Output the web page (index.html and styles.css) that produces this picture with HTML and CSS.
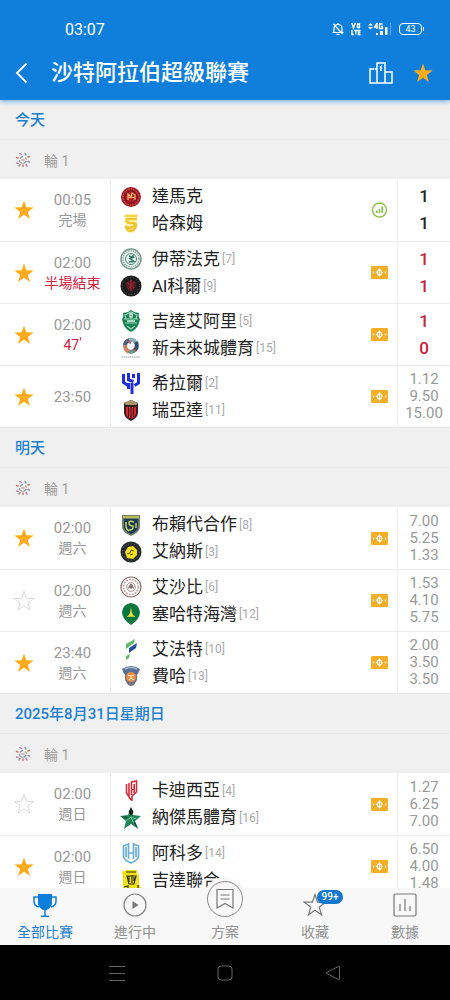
FILE: index.html
```html
<!DOCTYPE html>
<html lang="zh-Hant">
<head>
    <meta charset="UTF-8">
    <meta name="viewport" content="width=device-width, initial-scale=1.0">
    <title>沙特阿拉伯超級聯賽</title>
    <link rel="stylesheet" href="styles.css">
</head>
<body>
    <!-- Shared icons -->
    <svg class="sprite" aria-hidden="true">
        <symbol id="star" viewBox="0 0 24 24">
            <path d="M12 1.5l2.6 7.6 8 .1-6.4 4.9 2.3 7.7L12 17.2l-6.5 4.6 2.3-7.7-6.4-4.9 8-.1z"/>
        </symbol>
        <symbol id="odds" viewBox="0 0 17 13">
            <rect width="17" height="13" rx="1" fill="#f5ae25"/>
            <path d="M8.500 2l3.200 4.500-3.200 4.500-3.200-4.500z" fill="#fff"/>
            <circle cx="8.500" cy="6.500" r="2.800" fill="#fff"/>
            <path d="M7.500 5v3M9.500 5v3" stroke="#f5ae25" stroke-width=".9"/>
            <path d="M2.500 5.500v2M14.500 5.500v2" stroke="#fff" stroke-width="1.100"/>
        </symbol>
        <symbol id="league" viewBox="0 0 16 16">
            <g fill="none" stroke-width="1.500" stroke-linecap="round">
                <path d="M5 1.500l1.500 1M1.500 11l1.500.5M12 14l-1-1.500" stroke="#b08aab"/>
                <path d="M10 1.500l1 1.500M4 14l1-1.500M14.500 10l-1.500-.5" stroke="#8d9a94"/>
                <path d="M1.500 5.500l1.500.5M13 5l1.500-.5M8 14.500V13" stroke="#d2776c"/>
                <path d="M5.500 6l2-1.500M11 9.500l-2 1.500M4.500 8.500v1" stroke="#8b91a8"/>
                <path d="M10.500 6l1 1M5.500 10.500l1.500 1M7 8h2" stroke="#b9a79a"/>
            </g>
        </symbol>
    </svg>

    <header class="header">
        <div class="status-bar">
            <span class="clock">03:07</span>
            <div class="status-icons">
                <svg width="12" height="14" viewBox="0 0 12 14" fill="none" stroke="#fff" stroke-width="1.200">
                    <path d="M2 10V6.500C2 4 4 2.500 6 2.500S10 4 10 6.500V10M.5 10.500h11M4.500 12.500h3M6 1v1.500M1.500 2l9 10"/>
                </svg>
                <svg width="10" height="14" viewBox="0 0 10 14" fill="none" stroke="#fff" stroke-width="1.400">
                    <path d="M.8 1l1.700 5L4.300 1M6.500 2h2v3.500h-2zM1 8v4.500h2M3 8.500h3.500M4.800 8.500v4M9.500 8.500h-2v4h2M7.500 10.500h2"/>
                </svg>
                <svg width="24" height="14" viewBox="0 0 24 14" fill="#fff">
                    <path d="M0 3.500L2.500 1 5 3.500zM0 5l2.500 2.500L5 5z"/>
                    <path d="M9 1L6.500 5H10M9 1v6M14.500 2h-3v4.500h3v-2h-1.500" fill="none" stroke="#fff" stroke-width="1.300"/>
                    <path d="M8 11h2v2H8zM12 9h3v4h-3zM17 5h2.500v8H17z"/>
                    <path d="M22 1h1v12h-1z" opacity=".35"/>
                </svg>
                <span class="battery">43</span>
            </div>
        </div>
        <div class="title-bar">
            <button class="icon-btn back" aria-label="返回">
                <svg width="14" height="22" viewBox="0 0 14 22" fill="none" stroke="#fff" stroke-width="1.800"><path d="M11.500 1.500L2 11l9.500 9.500"/></svg>
            </button>
            <h1>沙特阿拉伯超級聯賽</h1>
            <div class="actions">
                <button class="icon-btn" aria-label="積分榜">
                    <svg width="24" height="22" viewBox="0 0 24 22" fill="none" stroke="#fff" stroke-width="1.500">
                        <path d="M8 21V1h8v20M8 7H5.500M5 7H1v14h22V10h-4M16 10h3M11 5.500l1-1V9"/>
                    </svg>
                </button>
                <button class="icon-btn fav on" aria-label="收藏">
                    <svg width="22" height="22"><use href="#star"/></svg>
                </button>
            </div>
        </div>
    </header>

    <main class="fixtures">
        <section>
            <h2 class="date">今天</h2>
            <div class="round"><svg width="16" height="16"><use href="#league"/></svg>輪 1</div>
            <div class="matches">
                <div class="match">
                    <button class="fav on" aria-label="收藏"><svg width="22" height="22"><use href="#star"/></svg></button>
                    <div class="time">00:05<span>完場</span></div>
                    <div class="teams">
                        <div class="team">
                            <svg class="crest" viewBox="0 0 22 22"><circle cx="11" cy="11" r="10" fill="#a51e28"/><circle cx="11" cy="11" r="8" fill="none" stroke="#d9765f" stroke-dasharray="1 1.500"/><circle cx="11" cy="11" r="6" fill="#b3202c" stroke="#701520"/><path d="M8 14V8l3 3 1-4 3 2v5M7.500 11.500H15" fill="none" stroke="#f0b96a" stroke-width="1.200"/></svg>
                            達馬克
                        </div>
                        <div class="team">
                            <svg class="crest" viewBox="0 0 22 22"><path d="M4.500 1.500h13v3h-13z" fill="#f7d54a"/><path d="M5 4h12v10a6 6 0 0 1-12 0z" fill="#fff3b5"/><path d="M17 6H8q-3 1-1 3 2 1.500 7 1 3 .5 2 3-1 4-5 5-4 0-5-4l5 1 4-3" fill="none" stroke="#eec52e" stroke-width="2.300"/></svg>
                            哈森姆
                        </div>
                    </div>
                    <svg class="tag" width="17" height="16" viewBox="0 0 17 16" fill="none" stroke="#8bc34a"><circle cx="8.500" cy="8" r="7" stroke-width="1.400"/><path d="M5.800 8.500V11M8.500 7v4M11.200 4.500V11" stroke-width="1.700"/></svg>
                    <div class="score"><span>1</span><span>1</span></div>
                </div>
                <div class="match">
                    <button class="fav on" aria-label="收藏"><svg width="22" height="22"><use href="#star"/></svg></button>
                    <div class="time">02:00<span class="live">半場結束</span></div>
                    <div class="teams">
                        <div class="team">
                            <svg class="crest" viewBox="0 0 22 22"><circle cx="11" cy="11" r="10" fill="#fff" stroke="#73988c" stroke-width="1.500"/><circle cx="11" cy="11" r="8" fill="none" stroke="#84a89c" stroke-width="1.600" stroke-dasharray="1.500 .8"/><circle cx="11" cy="11" r="5.500" fill="#e9f5f0" stroke="#438371"/><path d="M9 8l4 1.500-3 1 4 3-5 .5M13 7v2" fill="none" stroke="#287661" stroke-width="1.500"/></svg>
                            伊蒂法克<span class="rank">[7]</span>
                        </div>
                        <div class="team">
                            <svg class="crest" viewBox="0 0 22 22"><circle cx="11" cy="11" r="10.500" fill="#1c1b1c"/><circle cx="11" cy="11" r="8.500" fill="none" stroke="#59634e" stroke-dasharray="1 2"/><path d="M6 7l3-1 2-2 2 2 3 1v5l-5 5-5-5z" fill="#571d25"/><path d="M8 8l6 5M14 7l-6 7M11 5v11" stroke="#a12a37"/></svg>
                            Al科爾<span class="rank">[9]</span>
                        </div>
                    </div>
                    <svg class="tag" width="17" height="13"><use href="#odds"/></svg>
                    <div class="score live"><span>1</span><span>1</span></div>
                </div>
                <div class="match">
                    <button class="fav on" aria-label="收藏"><svg width="22" height="22"><use href="#star"/></svg></button>
                    <div class="time">02:00<span class="live">47<sup>'</sup></span></div>
                    <div class="teams">
                        <div class="team">
                            <svg class="crest" viewBox="0 0 22 22"><path d="M3 3l5-1 3-2 3 2 5 1q-1 4 1 6-1 9-9 13Q3 18 2 9q2-2 1-6z" fill="#168451"/><path d="M5 5l6-3 6 3-1 4H6zM4 9h14M5 13h12M7 16l4 3 4-3" fill="none" stroke="#a1d5ba" stroke-width="1.200"/><path d="M7 11h8M10 4h2v3h-2z" stroke="#e3f4e9" stroke-width="1.300"/></svg>
                            吉達艾阿里<span class="rank">[5]</span>
                        </div>
                        <div class="team">
                            <svg class="crest" viewBox="0 0 22 22" fill="none" stroke-width="4"><path d="M5 9q0-5 5-6" stroke="#44617b"/><path d="M9 3q5-1 7 3" stroke="#8db0b5"/><path d="M16 5q2 5-1 8" stroke="#354b68"/><path d="M15 13q-3 3-7 1" stroke="#5d9b92"/><path d="M9 15q-4-2-4-7" stroke="#cf8260"/><path d="M7 4l4 2M13 12l3 2" stroke="#a85860" stroke-width="2"/><path d="M1.500 20h19" stroke="#bbb" stroke-width="1.500" stroke-dasharray="1.500 .6"/></svg>
                            新未來城體育<span class="rank">[15]</span>
                        </div>
                    </div>
                    <svg class="tag" width="17" height="13"><use href="#odds"/></svg>
                    <div class="score live"><span>1</span><span>0</span></div>
                </div>
                <div class="match">
                    <button class="fav on" aria-label="收藏"><svg width="22" height="22"><use href="#star"/></svg></button>
                    <div class="time">23:50</div>
                    <div class="teams">
                        <div class="team">
                            <svg class="crest" viewBox="0 0 22 22" fill="none" stroke="#1e2ed8" stroke-width="3"><path d="M3.500 2v8.500l4.500 3M8.500 1v7l5 1.500M13.500 2v4M18.500 1v10l-4 2.500M12 11v11M8.500 11v6"/></svg>
                            希拉爾<span class="rank">[2]</span>
                        </div>
                        <div class="team">
                            <svg class="crest" viewBox="0 0 22 22"><path d="M4 4l7-3 7 3v9q0 6-7 9-7-3-7-9z" fill="#2d2021"/><path d="M4 4l7-3 7 3-2 2H6z" fill="#a6956a"/><path d="M6 8h10v6q0 4-5 6-5-2-5-6z" fill="#dc2631"/><path d="M8.500 8v10M11 8v12M13.500 8v10" stroke="#331b1d" stroke-width="1"/></svg>
                            瑞亞達<span class="rank">[11]</span>
                        </div>
                    </div>
                    <svg class="tag" width="17" height="13"><use href="#odds"/></svg>
                    <div class="prices"><span>1.12</span><span>9.50</span><span>15.00</span></div>
                </div>
            </div>
        </section>

        <section>
            <h2 class="date">明天</h2>
            <div class="round"><svg width="16" height="16"><use href="#league"/></svg>輪 1</div>
            <div class="matches">
                <div class="match">
                    <button class="fav on" aria-label="收藏"><svg width="22" height="22"><use href="#star"/></svg></button>
                    <div class="time">02:00<span>週六</span></div>
                    <div class="teams">
                        <div class="team">
                            <svg class="crest" viewBox="0 0 22 22"><path d="M2 1h18v12q0 5-9 9-9-4-9-9z" fill="#718066"/><path d="M4 5h14v8q0 4-7 7-7-3-7-7z" fill="#193958"/><path d="M3 3h16" stroke="#d5cb55" stroke-width="1.500"/><path d="M14 8q-5-2-5 1t4 3q1 4-4 4M6 8v5q1 3 3 4M16 9v5" fill="none" stroke="#c9d15f" stroke-width="1.500"/></svg>
                            布賴代合作<span class="rank">[8]</span>
                        </div>
                        <div class="team">
                            <svg class="crest" viewBox="0 0 22 22"><circle cx="11" cy="11" r="10.500" fill="#272a2c"/><circle cx="11" cy="11" r="8.300" fill="none" stroke="#65706b" stroke-dasharray="1 2"/><path d="M5 11l3-5 5-1 4 4v5l-4 4-6-1z" fill="#f4df20"/><path d="M7 13l3-1 1-3 3 1M10 14l3-1" fill="none" stroke="#5c5919" stroke-width="1"/></svg>
                            艾納斯<span class="rank">[3]</span>
                        </div>
                    </div>
                    <svg class="tag" width="17" height="13"><use href="#odds"/></svg>
                    <div class="prices"><span>7.00</span><span>5.25</span><span>1.33</span></div>
                </div>
                <div class="match">
                    <button class="fav" aria-label="收藏"><svg width="22" height="22"><use href="#star"/></svg></button>
                    <div class="time">02:00<span>週六</span></div>
                    <div class="teams">
                        <div class="team">
                            <svg class="crest" viewBox="0 0 22 22" fill="none"><circle cx="11" cy="11" r="10" fill="#fff" stroke="#8d6d6d" stroke-width="1.200"/><circle cx="11" cy="11" r="7.500" stroke="#c8aaaa" stroke-width="1.600" stroke-dasharray="2 1"/><circle cx="11" cy="11" r="4.300" stroke="#aa8888"/><path d="M8.500 12.500q1-4 2.500-4t2.500 4M9 11h4M11 8v5" stroke="#684c50"/></svg>
                            艾沙比<span class="rank">[6]</span>
                        </div>
                        <div class="team">
                            <svg class="crest" viewBox="0 0 22 22"><path d="M11 0q8 1 9 9 0 7-9 13Q2 16 2 9q1-8 9-9z" fill="#08763e"/><path d="M11 4l1 6 2 3H8l2-3z" fill="#eadf39"/><path d="M7 13.500h8" stroke="#b9c83e"/></svg>
                            塞哈特海灣<span class="rank">[12]</span>
                        </div>
                    </div>
                    <svg class="tag" width="17" height="13"><use href="#odds"/></svg>
                    <div class="prices"><span>1.53</span><span>4.10</span><span>5.75</span></div>
                </div>
                <div class="match">
                    <button class="fav on" aria-label="收藏"><svg width="22" height="22"><use href="#star"/></svg></button>
                    <div class="time">23:40<span>週六</span></div>
                    <div class="teams">
                        <div class="team">
                            <svg class="crest" viewBox="0 0 22 22"><path d="M6 6l9-5-1 4-8 6z" fill="#62b86a"/><path d="M9 10l8-5-1 5-7 5z" fill="#294f9b"/><path d="M6 18l4-2-1 4-3 2z" fill="#62b86a"/></svg>
                            艾法特<span class="rank">[10]</span>
                        </div>
                        <div class="team">
                            <svg class="crest" viewBox="0 0 22 22"><path d="M5 7h12v8l-3 5-3 1-3-1-3-5z" fill="#727480"/><path d="M2 4q9-6 18 0l-2 5H4z" fill="#597296"/><path d="M5 4q6-3 12 0" fill="none" stroke="#a9bbd1" stroke-width="1.500"/><circle cx="11" cy="12" r="5" fill="#ed8c43"/><path d="M8 10l3 1 3-1M11 11v2l-2 2M11 13l3 2" fill="none" stroke="#ffe0b9" stroke-width="1.200"/></svg>
                            費哈<span class="rank">[13]</span>
                        </div>
                    </div>
                    <svg class="tag" width="17" height="13"><use href="#odds"/></svg>
                    <div class="prices"><span>2.00</span><span>3.50</span><span>3.50</span></div>
                </div>
            </div>
        </section>

        <section>
            <h2 class="date">2025年8月31日星期日</h2>
            <div class="round"><svg width="16" height="16"><use href="#league"/></svg>輪 1</div>
            <div class="matches">
                <div class="match">
                    <button class="fav" aria-label="收藏"><svg width="22" height="22"><use href="#star"/></svg></button>
                    <div class="time">02:00<span>週日</span></div>
                    <div class="teams">
                        <div class="team">
                            <svg class="crest" viewBox="0 0 22 22" fill="none" stroke="#cf2f3c" stroke-width="1.600"><path d="M6.500 4v9l2 3M9 3v14l2 3M11.500 9V2l5-1v11l-4.500 4v5M11.500 10l3-1.500M11.500 9v6M14.200 4v9"/></svg>
                            卡迪西亞<span class="rank">[4]</span>
                        </div>
                        <div class="team">
                            <svg class="crest" viewBox="0 0 22 22"><path d="M11 1l2 7 8 1-6 5 3 8-7-5-7 5 2-8-6-5 8-1z" fill="#208659"/><path d="M11 0l2.500 5-2.500 4-2.500-4z" fill="#17221d"/><path d="M11 10l-5 4M11 10l5 2M11 10l3 7" stroke="#72c39c"/><path d="M2 9l6 1-2 2zM18 21l-5-5 2-1z" fill="#194d37"/></svg>
                            納傑馬體育<span class="rank">[16]</span>
                        </div>
                    </div>
                    <svg class="tag" width="17" height="13"><use href="#odds"/></svg>
                    <div class="prices"><span>1.27</span><span>6.25</span><span>7.00</span></div>
                </div>
                <div class="match">
                    <button class="fav on" aria-label="收藏"><svg width="22" height="22"><use href="#star"/></svg></button>
                    <div class="time">02:00<span>週日</span></div>
                    <div class="teams">
                        <div class="team">
                            <svg class="crest" viewBox="0 0 22 22" fill="none" stroke="#6aaed7" stroke-width="1.700"><path d="M8.500 17V2L3.500 4v10q0 4 7.500 7 7.500-3 7.500-7V4l-5-2v15M8.500 11h5M6 5v10M16 5v10"/></svg>
                            阿科多<span class="rank">[14]</span>
                        </div>
                        <div class="team">
                            <svg class="crest" viewBox="0 0 22 22"><path d="M2 3l4-2h11v3l2 2v9l2 4v3H3V9z" fill="#efe11a"/><path d="M6 3h10M7 7h9l-2 8H9zM9 7v6M12 6v8M14 8v4M4 18l4-1v4M18 16v4" fill="none" stroke="#343116" stroke-width="1.200"/></svg>
                            吉達聯合
                        </div>
                    </div>
                    <svg class="tag" width="17" height="13"><use href="#odds"/></svg>
                    <div class="prices"><span>6.50</span><span>4.00</span><span>1.48</span></div>
                </div>
            </div>
        </section>
    </main>

    <nav class="tabs">
        <a href="#" class="tab active">
            <svg width="24" height="24" viewBox="0 0 24 24" fill="none" stroke="#0f7fdb" stroke-width="1.500">
                <path d="M5 1h14v10q-2 6-7 6t-7-6z" fill="#0f7fdb" stroke="none"/>
                <path d="M5 4H1v4q0 5 5 6M19 4h4v4q0 5-5 6M12 16v7M8 23.200h8"/>
            </svg>
            全部比賽
        </a>
        <a href="#" class="tab">
            <svg width="24" height="24" viewBox="0 0 24 24" fill="none" stroke="#858585" stroke-width="1.200">
                <circle cx="12" cy="12" r="11"/><path d="M9.500 8l6 4-6 4z" fill="#777" stroke="none"/>
            </svg>
            進行中
        </a>
        <a href="#" class="tab">
            <span class="plan">
                <svg width="20" height="22" viewBox="0 0 20 22" fill="none" stroke="#777" stroke-width="1.200"><path d="M2 1.500h16v18.500l-8-4.500L2 20zM5.500 7h9M5.500 11h9"/></svg>
            </span>
            方案
        </a>
        <a href="#" class="tab">
            <span class="badge-wrap">
                <svg width="24" height="24" viewBox="0 0 24 24" fill="none" stroke="#777" stroke-width="1.200"><use href="#star"/></svg>
                <span class="badge">99+</span>
            </span>
            收藏
        </a>
        <a href="#" class="tab">
            <svg width="24" height="24" viewBox="0 0 24 24" fill="none" stroke="#777" stroke-width="1.200">
                <rect x="1" y="1" width="22" height="22" rx="1.500"/><path d="M7 11v7M12 6v12M17 13v5"/>
            </svg>
            數據
        </a>
    </nav>

    <div class="system-nav">
        <button class="icon-btn" aria-label="選單"><svg width="16" height="16" viewBox="0 0 16 16" fill="none" stroke="#666"><path d="M0 1.500h16M0 8.500h16M0 15.500h16"/></svg></button>
        <button class="icon-btn" aria-label="主畫面"><svg width="16" height="16" viewBox="0 0 16 16" fill="none" stroke="#666"><rect x="1" y="1" width="14" height="14" rx="3"/></svg></button>
        <button class="icon-btn" aria-label="返回"><svg width="16" height="16" viewBox="0 0 16 16" fill="none" stroke="#666"><path d="M14.500 2v12q0 1-1 .5L1.500 8.500q-.8-.5 0-1l12-6q1-.5 1 .5z"/></svg></button>
    </div>
</body>
</html>
```

FILE: styles.css
```css
* {
    margin: 0;
    padding: 0;
    box-sizing: border-box;
}

body {
    height: 100vh;
    display: flex;
    flex-direction: column;
    overflow: hidden;
    background: #fff;
    color: #222;
    font-family: Roboto, 'Noto Sans CJK TC', sans-serif;
}

button {
    border: none;
    background: none;
    cursor: pointer;
}

svg {
    display: block;
    flex-shrink: 0;
}

.sprite {
    position: absolute;
    width: 0;
    height: 0;
}

/* Header */
.header {
    position: relative;
    background: #0f7fdb;
    color: #fff;
    padding-top: 16px;
    box-shadow: 0 1px 5px rgba(15, 127, 219, 0.7);
}

.status-bar {
    display: flex;
    justify-content: space-between;
    align-items: center;
    height: 26px;
    padding: 0 28px 0 65px;
    font-size: 16px;
}

.status-icons {
    display: flex;
    align-items: center;
    gap: 7px;
}

.battery {
    position: relative;
    width: 23px;
    height: 12px;
    border: 1px solid #fff;
    border-radius: 4px;
    font-size: 9px;
    line-height: 10px;
    text-align: center;
}

.battery::after {
    content: '';
    position: absolute;
    top: 3px;
    right: -3px;
    width: 1px;
    height: 4px;
    background: #fff;
}

.title-bar {
    display: flex;
    align-items: center;
    height: 58px;
    padding: 4px 16px 0 15px;
    gap: 18px;
}

.title-bar h1 {
    flex: 1;
    margin-left: 4px;
    font-size: 22px;
    line-height: 30px;
    font-weight: 500;
}

.actions {
    display: flex;
    align-items: center;
    gap: 6px;
}

/* Fixture list */
.fixtures {
    flex: 1;
    min-height: 0;
    overflow: hidden;
    background: #f0f0f0;
}

.date {
    height: 40px;
    padding-left: 15px;
    border-bottom: 1px solid #e9e9e9;
    color: #1c80cf;
    font-size: 15px;
    line-height: 41px;
    font-weight: 500;
}

.round {
    display: flex;
    align-items: center;
    gap: 13px;
    height: 39px;
    padding-left: 15px;
    color: #a0a0a0;
    font-size: 14px;
}

.matches {
    border-bottom: 1px solid #e9e9e9;
}

.match {
    display: grid;
    grid-template-columns: 35px 75px 1fr auto 53px;
    align-items: center;
    height: 62px;
    background: #fff;
}

.match + .match {
    border-top: 1px solid #ececec;
}

.fav {
    padding-left: 13px;
    fill: none;
    stroke: #d5d5d5;
}

.fav.on {
    fill: #ffac1c;
    stroke: none;
}

.time {
    color: #999;
    font-size: 15px;
    line-height: 20px;
    text-align: center;
}

.time span {
    display: block;
    font-size: 14px;
}

.time .live {
    color: #d0213f;
}

.time sup {
    font-size: 14px;
    line-height: 1px;
    vertical-align: 2px;
}

.teams {
    display: flex;
    flex-direction: column;
    justify-content: center;
    height: 100%;
    padding-left: 9px;
    border-left: 1px solid #ececec;
}

.team {
    display: flex;
    align-items: center;
    height: 27px;
    font-size: 17px;
    line-height: 27px;
    white-space: nowrap;
}

.crest {
    width: 22px;
    height: 22px;
    margin-right: 10px;
}

.rank {
    margin-left: 2px;
    padding-top: 1px;
    color: #aaa;
    font-size: 12px;
}

.tag {
    margin-right: 9px;
}

.score,
.prices {
    display: flex;
    flex-direction: column;
    justify-content: center;
    height: 100%;
    border-left: 1px solid #f1f1f1;
    text-align: center;
}

.score {
    font-size: 17px;
    line-height: 27px;
    font-weight: 500;
}

.score.live {
    color: #c8213a;
}

.prices {
    color: #999;
    font-size: 15px;
    line-height: 17px;
}

/* Bottom tabs */
.tabs {
    display: flex;
    height: 57px;
    padding-bottom: 4px;
    background: #f8f8f8;
}

.tab {
    flex: 1;
    display: flex;
    flex-direction: column;
    align-items: center;
    justify-content: flex-end;
    gap: 6px;
    color: #919191;
    font-size: 14px;
    line-height: 18px;
    text-decoration: none;
}

.tab.active {
    color: #1c80cf;
}

.plan {
    display: flex;
    align-items: center;
    justify-content: center;
    flex-shrink: 0;
    width: 36px;
    height: 36px;
    border: 1px solid #888;
    border-radius: 50%;
    background: #f8f8f8;
    box-shadow: 0 0 0 4px #f8f8f8;
}

.badge-wrap {
    position: relative;
}

.badge {
    position: absolute;
    top: -3px;
    left: 14px;
    width: 26px;
    border-radius: 7px;
    background: #1377cc;
    color: #fff;
    font-size: 10px;
    line-height: 14px;
    font-weight: 500;
    text-align: center;
}

/* Android navigation */
.system-nav {
    display: flex;
    justify-content: center;
    align-items: center;
    gap: 92px;
    height: 55px;
    background: #000;
}
```
